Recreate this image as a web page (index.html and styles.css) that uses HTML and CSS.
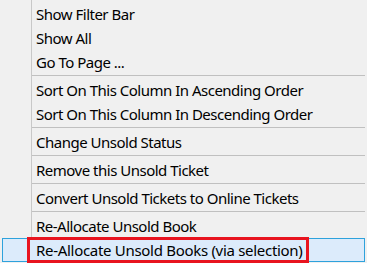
FILE: index.html
```html
<!DOCTYPE html>
<html lang="en">

<head>
  <meta charset="UTF-8">
  <meta name="viewport" content="width=device-width, initial-scale=1.0">
  <title>Context Menu</title>
  <link rel="stylesheet" href="styles.css">
</head>

<body>
  <ul class="menu">
    <li class="item">Show Filter Bar</li>
    <li class="item">Show All</li>
    <li class="item">Go To Page ...</li>
    <li class="sep"></li>
    <li class="item">Sort On This Column In Ascending Order</li>
    <li class="item">Sort On This Column In Descending Order</li>
    <li class="sep"></li>
    <li class="item">Change Unsold Status</li>
    <li class="sep"></li>
    <li class="item">Remove this Unsold Ticket</li>
    <li class="sep"></li>
    <li class="item">Convert Unsold Tickets to Online Tickets</li>
    <li class="sep"></li>
    <li class="item">Re-Allocate Unsold Book</li>
    <li class="item active"><span class="mark">Re-Allocate Unsold Books (via selection)</span></li>
  </ul>
</body>

</html>
```
FILE: styles.css
```css
* {
  margin: 0;
  padding: 0;
  box-sizing: border-box;
}

body {
  background: #f0f0f0;
  font-family: "Noto Sans", "Open Sans", sans-serif;
  font-size: 15px;
  letter-spacing: -0.5px;
  color: #000;
  overflow: hidden;
}

.menu {
  list-style: none;
  margin: 0 2px 0 31px;
  padding-top: 2px;
  min-height: 100vh;
  border-left: 1px solid #c8c8c8;
}

.item {
  height: 24px;
  line-height: 24px;
  padding-left: 4px;
  white-space: nowrap;
}

.sep {
  height: 1px;
  margin: 1px 0 2px;
  background: #c0c0c0;
}

.item.active {
  display: flex;
  align-items: center;
  margin-left: -30px;
  padding-left: 0;
  background: #dcebfb;
  border: 1px solid #2ea2dc;
}

.mark {
  height: 26px;
  line-height: 20px;
  margin-left: 24px;
  padding: 0 3px 0 6px;
  letter-spacing: -0.3px;
  border: 3px solid #e8141f;
}
```
